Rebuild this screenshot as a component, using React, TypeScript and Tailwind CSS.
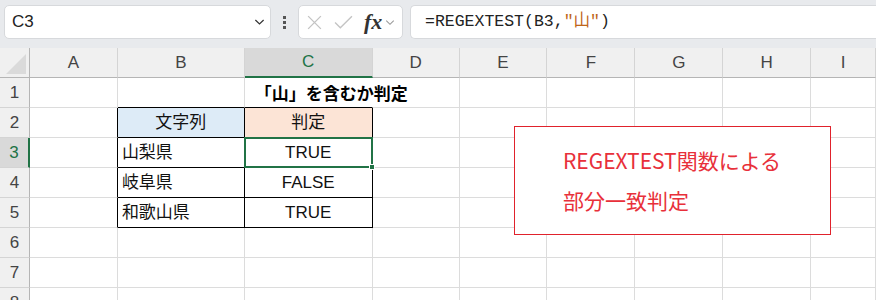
import React from 'react';

const cols = [
  { name: 'A', w: 'w-[88px]' },
  { name: 'B', w: 'w-[127px]' },
  { name: 'C', w: 'w-[128px]' },
  { name: 'D', w: 'w-[87px]' },
  { name: 'E', w: 'w-[88px]' },
  { name: 'F', w: 'w-[88px]' },
  { name: 'G', w: 'w-[88px]' },
  { name: 'H', w: 'w-[88px]' },
  { name: 'I', w: 'w-[65px]' },
];

const rows = [1, 2, 3, 4, 5, 6, 7, 8];

const data: Record<string, string> = {
  B2: '文字列',
  C2: '判定',
  B3: '山梨県',
  C3: 'TRUE',
  B4: '岐阜県',
  C4: 'FALSE',
  B5: '和歌山県',
  C5: 'TRUE',
};

function Chevron({ className }: { className?: string }) {
  return (
    <svg viewBox="0 0 12 8" className={className} fill="none" stroke="currentColor" strokeWidth="1.3">
      <path d="M1.5 1.8 L6 6.2 L10.5 1.8" />
    </svg>
  );
}

function Cell({ col, row }: { col: string; row: number }) {
  const key = `${col}${row}`;
  const inTable = (col === 'B' || col === 'C') && row >= 2 && row <= 5;
  let border = 'border-r border-b border-[#dcdcdc]';
  if (inTable) border = 'border-r border-b border-black';
  else if (col === 'A' && row >= 2 && row <= 5) border = 'border-r border-b border-r-black border-b-[#dcdcdc]';
  else if ((col === 'B' || col === 'C') && row === 1) border = 'border-r border-b border-b-black border-r-[#dcdcdc]';
  if (col === 'C' && row === 1) border = 'border-r border-b border-b-black border-r-white';

  let bg = 'bg-white';
  if (key === 'B2') bg = 'bg-[#ddebf7]';
  if (key === 'C2') bg = 'bg-[#fce4d6]';

  const text = data[key];
  const align = col === 'B' && row >= 3 ? 'justify-start pl-[4px]' : 'justify-center';

  return (
    <div className={`relative h-full ${border} ${bg} flex items-center ${align} text-[17px] text-[#111]`}>
      {key === 'C1' && (
        <span className="absolute left-[10px] top-[4px] whitespace-nowrap font-bold text-[17px] text-black z-10">
          「山」を含むか判定
        </span>
      )}
      {text}
      {key === 'C3' && (
        <div className="absolute -left-px -top-px -right-px -bottom-px border-2 border-[#217346] z-10">
          <div className="absolute -right-[4px] -bottom-[4px] w-[6px] h-[6px] bg-[#217346] border border-white" />
        </div>
      )}
    </div>
  );
}

export default function App() {
  return (
    <div className="w-[876px] h-[300px] overflow-hidden bg-white font-['Liberation_Sans','Noto_Sans_CJK_JP',sans-serif] relative">
      {/* formula bar */}
      <div className="h-[48px] bg-[#e8eaed] flex items-start pt-[5px] pl-[4px] gap-0">
        <div className="w-[267px] h-[34px] bg-white rounded-[5px] border border-[#d7d9dc] flex items-center justify-between pl-[7px] pr-[4px]">
          <span className="text-[17px] text-[#222]">C3</span>
          <Chevron className="w-[11px] h-[8px] text-[#333] mr-[1px]" />
        </div>
        <div className="w-[27px] h-[34px] flex flex-col items-center justify-center gap-[2px]">
          <span className="w-[3px] h-[3px] bg-[#555]" />
          <span className="w-[3px] h-[3px] bg-[#555]" />
          <span className="w-[3px] h-[3px] bg-[#555]" />
        </div>
        <div className="w-[105px] h-[34px] bg-white rounded-[5px] border border-[#d7d9dc] flex items-center pl-[7px] gap-[11px]">
          <svg viewBox="0 0 16 16" className="w-[17px] h-[17px]" fill="none" stroke="#c4c4c4" strokeWidth="1.3">
            <path d="M2 2 L14 14 M14 2 L2 14" />
          </svg>
          <svg viewBox="0 0 18 14" className="w-[19px] h-[15px]" fill="none" stroke="#c4c4c4" strokeWidth="1.3">
            <path d="M1 7 L6 12 L17 1" />
          </svg>
          <div className="flex items-center gap-[3px]">
            <span className="font-['Liberation_Serif',serif] italic font-bold text-[22px] text-[#333] leading-none">fx</span>
            <Chevron className="w-[10px] h-[7px] text-[#999]" />
          </div>
        </div>
        <div className="ml-[7px] flex-1 h-[34px] bg-white rounded-l-[5px] border border-r-0 border-[#d7d9dc] flex items-center pl-[14px]">
          <span className="font-['Liberation_Mono','Noto_Sans_CJK_JP',monospace] text-[16.5px] text-[#222] whitespace-nowrap">
            =REGEXTEST(B3,<span className="text-[#c0661a]">"山"</span>)
          </span>
        </div>
      </div>

      {/* column headers */}
      <div className="flex h-[30px]">
        <div className="w-[30px] h-full bg-[#f0f0f0] border-r border-b border-[#b5b5b5] relative flex items-end justify-end p-[3px]">
          <div className="w-0 h-0 border-l-[20px] border-l-transparent border-b-[20px] border-b-[#dadada]" />
        </div>
        {cols.map((c) => (
          <div
            key={c.name}
            className={`${c.w} h-full flex items-center justify-center text-[17px] border-r border-[#d4d4d4] ${
              c.name === 'C'
                ? 'bg-[#d9d9d9] text-[#217346] border-b-2 border-b-[#217346]'
                : 'bg-[#f0f0f0] text-[#444] border-b border-b-[#b5b5b5]'
            }`}
          >
            {c.name}
          </div>
        ))}
      </div>

      {/* rows */}
      {rows.map((r) => (
        <div key={r} className="flex h-[30px]">
          <div
            className={`w-[30px] h-full flex items-center justify-center text-[17px] border-b border-[#d4d4d4] ${
              r === 3
                ? 'bg-[#d9d9d9] text-[#217346] border-r-2 border-r-[#217346]'
                : 'bg-[#f0f0f0] text-[#444] border-r border-r-[#b5b5b5]'
            }`}
          >
            {r}
          </div>
          {cols.map((c) => (
            <div key={c.name} className={`${c.w} h-full`}>
              <Cell col={c.name} row={r} />
            </div>
          ))}
        </div>
      ))}

      {/* text box shape */}
      <div className="absolute left-[514px] top-[126px] w-[317px] h-[109px] bg-white border border-[#e0222c] pl-[48px] pt-[13px] font-['Noto_Sans_CJK_JP',sans-serif] text-[21px] leading-[40px] text-[#e8303a]">
        <div>REGEXTEST関数による</div>
        <div>部分一致判定</div>
      </div>
    </div>
  );
}
